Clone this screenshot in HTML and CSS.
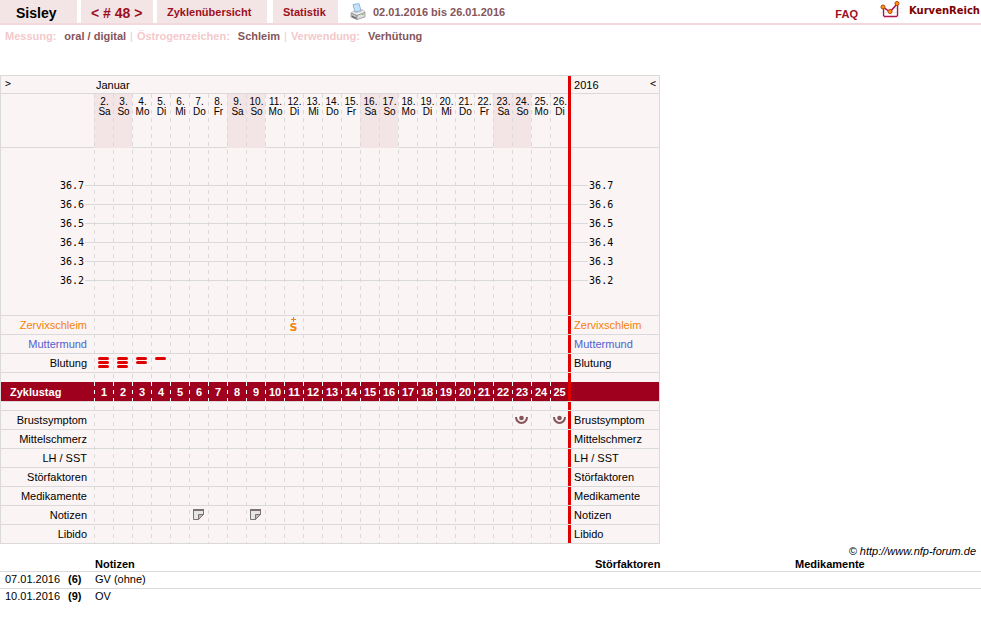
FILE: index.html
```html
<!DOCTYPE html>
<html lang="de">
<head>
    <meta charset="UTF-8">
    <title>KurvenReich - Sisley</title>
    <meta name="viewport" content="width=device-width, initial-scale=1.0">
    <link rel="stylesheet" href="styles.css">
</head>
<body>
<header class="top">
    <h1 class="tab name">Sisley</h1>
    <div class="tab cycle"><a href="#">&lt;</a> <a href="#"># 48</a> <a href="#">&gt;</a></div>
    <a class="tab overview" href="#">Zyklenübersicht</a>
    <a class="tab stats" href="#">Statistik</a>
    <a class="print" href="#" aria-label="Drucken">
        <svg width="16" height="18" viewBox="0 0 16 18">
            <path d="M3 1.500l6-.8 2 7-6 1.300z" fill="#c5e2fa" stroke="#8fb3dc"/>
            <path d="M1 10l3-2 1 1.500 6-1 0-2 3 1 1 2-8 3z" fill="#eee" stroke="#aaa" stroke-width=".7"/>
            <path d="M1 10l6 2.500v4l-6-2.500z" fill="#c4c4c4" stroke="#888" stroke-width=".7"/>
            <path d="M7 12.500l8-3v4.500l-8 2.500z" fill="#dedede" stroke="#888" stroke-width=".7"/>
            <path d="M2 12.500l4 2v1.500l-4-2z" fill="#666"/>
            <path d="M12 11.500h1.500" stroke="#8bbf5c"/>
        </svg>
    </a>
    <span class="range">02.01.2016 bis 26.01.2016</span>
    <a class="faq" href="#">FAQ</a>
    <a class="logo" href="#">
        <svg width="26" height="20" viewBox="0 0 26 20">
            <path d="M0 12.500h24M3 8.500h20M5.500 8v11M12.500 8v11M19.500 5v14" stroke="#eee" fill="none"/>
            <path d="M4.500 8v7.500l1 1h12l1-1V4" stroke="#b0124f" stroke-width="1.300" fill="none"/>
            <path d="M4 7l7 5 7-8" stroke="#a0104a" stroke-width="1.500" fill="none"/>
            <g fill="#ff9a0a" stroke="#b8400c">
                <circle cx="4" cy="7" r="2"/>
                <circle cx="11" cy="11.500" r="2"/>
                <circle cx="18" cy="3.500" r="2"/>
            </g>
        </svg>
        <span>KurvenReich</span>
    </a>
</header>

<div class="info">
    <span class="key">Messung:</span><span class="value">oral / digital</span><i>|</i>
    <span class="key">Östrogenzeichen:</span><span class="value">Schleim</span><i>|</i>
    <span class="key">Verwendung:</span><span class="value">Verhütung</span>
</div>

<table class="chart">
    <colgroup id="cols"></colgroup>
    <tbody id="chart"></tbody>
</table>

<p class="copy"><a href="#">© http://www.nfp-forum.de</a></p>

<table class="notes">
    <thead>
    <tr>
        <th class="date"></th>
        <th class="day"></th>
        <th class="note">Notizen</th>
        <th class="factor">Störfaktoren</th>
        <th>Medikamente</th>
    </tr>
    </thead>
    <tbody>
    <tr>
        <td class="date">07.01.2016</td>
        <td class="day">(6)</td>
        <td>GV (ohne)</td>
        <td></td>
        <td></td>
    </tr>
    <tr>
        <td class="date">10.01.2016</td>
        <td class="day">(9)</td>
        <td>OV</td>
        <td></td>
        <td></td>
    </tr>
    </tbody>
</table>
<script src="chart.js"></script>
</body>
</html>
```

FILE: styles.css
```css
* {
    margin: 0;
    padding: 0;
    box-sizing: border-box;
}

body {
    background: #fff;
    color: #000;
    font: 11px/14px "Liberation Sans", Arial, sans-serif;
}

a {
    color: inherit;
    text-decoration: none;
}

svg {
    display: block;
}

/* header */
.top {
    display: flex;
    height: 25px;
    border-bottom: 2px solid #f3d9db;
    color: #9b1022;
    font-weight: bold;
    line-height: 24px;
    white-space: nowrap;
}

.tab {
    background: #f3e4e5;
    margin-right: 4px;
    padding: 0 10px;
}

.name {
    width: 77px;
    padding: 0 16px;
    color: #000;
    font-size: 14px;
    line-height: 26px;
}

.cycle {
    width: 72px;
    font-size: 14px;
    line-height: 26px;
}

.overview {
    width: 110px;
    margin-right: 6px;
}

.stats {
    width: 65px;
}

.print {
    padding: 3px 7px 0 8px;
}

.range {
    color: #85555a;
}

.faq {
    margin-left: auto;
    line-height: 28px;
}

.logo {
    display: flex;
    gap: 4px;
    padding: 0 1px 0 21px;
    color: #7d0000;
    font: bold 10px/22px "DejaVu Sans", Verdana, sans-serif;
}

.info {
    display: flex;
    padding: 4px 5px;
    margin-bottom: 28px;
    font-weight: bold;
}

.info .key {
    color: #f3c9cb;
    margin-right: 8px;
}

.info .value {
    color: #85555a;
}

.info i {
    margin: 0 4px;
    color: #f3c9cb;
    font-style: normal;
    font-weight: normal;
}

/* chart */
.chart, .chart .dash {
    --bg: #faf4f4;
    --dash: #dadada;
    background-color: var(--bg);
    background-image: linear-gradient(90deg, transparent 1px, var(--bg) 1px), linear-gradient(var(--dash) 4px, var(--bg) 4px);
    background-size: 19px 8px;
}

.chart {
    width: 660px;
    table-layout: fixed;
    border-collapse: separate;
    border-spacing: 0;
    border: 1px solid #dadada;
    border-bottom: 0;
    background-position: 93px 2px;
}

.col-label {
    width: 93px;
}

.col-day {
    width: 19px;
}

.col-last {
    width: 18px;
}

.col-end {
    width: 3px;
}

.chart td, .chart th {
    height: 19px;
    border-bottom: 1px solid #dadada;
    font-weight: normal;
}

.chart .left, .chart .right, .chart .month {
    background-color: #faf4f4;
}

.chart .left {
    padding-right: 7px;
    text-align: right;
}

.chart .right {
    padding-left: 3px;
    text-align: left;
}

.chart .head td, .chart .head th {
    height: 18px;
}

.chart .month {
    padding-left: 2px;
    text-align: left;
}

.chart .head .left {
    padding-left: 4px;
    text-align: left;
    vertical-align: top;
}

.year {
    display: flex;
    justify-content: space-between;
    padding-right: 3px;
}

.arrow {
    font: 10px/12px "DejaVu Sans Mono", monospace;
}

.chart .end {
    background: #e00000;
}

.chart .head .end, .chart .dates .end {
    border-color: #e00000;
}

.chart .dates th {
    height: 54px;
    padding: 3px 0 0 2px;
    font: 10px/10px "Liberation Sans Narrow", "Liberation Sans", sans-serif;
    text-align: center;
    vertical-align: top;
}

.chart .weekend {
    --bg: #f3e4e5;
    border-color: var(--bg);
}

.chart .space td, .chart .temp td, .chart .temp th {
    border-bottom: 0;
}

.chart .above td {
    height: 28px;
}

.chart .below td {
    height: 26px;
    border-bottom: 1px solid #dadada;
}

.chart .temp td, .chart .temp th {
    font: 10px/19px "DejaVu Sans Mono", monospace;
}

.temp td {
    background: linear-gradient(#dadada, #dadada) 0 9px / 100% 1px no-repeat;
}

.chart .temp .left {
    padding-right: 10px;
    background: #faf4f4 linear-gradient(#dadada, #dadada) right 9px / 9px 1px no-repeat;
}

.chart .temp .right {
    padding-left: 18px;
    background: #faf4f4 linear-gradient(#dadada, #dadada) 0 9px / 17px 1px no-repeat;
}

.chart .mucus {
    color: #f5820a;
}

.chart .cervix {
    color: #5062d0;
}

/* mucus quality: plus sign above the letter */
.quality {
    height: 18px;
    padding-top: 1px;
    font: bold 11px/12px "DejaVu Sans", Verdana, sans-serif;
    text-align: center;
}

.chart .gap td {
    height: 9px;
    border-bottom: 0;
}

.chart .gap.after td {
    border-bottom: 1px solid #dadada;
}

.chart .band td, .chart .band th {
    --bg: #9e001e;
    --dash: #fff;
    height: 20px;
    background-color: #9e001e;
    color: #fff;
    font-weight: bold;
    text-align: center;
}

.chart .band td {
    padding-left: 1px;
}

.chart .band .left {
    padding-left: 9px;
    text-align: left;
}

.chart .band .end {
    background: #e00000;
}

.chart td svg {
    margin: 0 auto;
}

/* notes */
.copy {
    padding-right: 5px;
    line-height: 14px;
    text-align: right;
    font-style: italic;
}

.notes {
    width: 100%;
    table-layout: fixed;
    border-spacing: 0;
}

.notes th {
    height: 13px;
    line-height: 13px;
    text-align: left;
}

.notes td {
    height: 17px;
    border-top: 1px solid #dadada;
    vertical-align: top;
}

.notes .date {
    width: 68px;
    padding-left: 5px;
}

.notes .day {
    width: 27px;
    font-weight: bold;
}

.notes .note {
    width: 500px;
}

.notes .factor {
    width: 200px;
}
```

FILE: chart.js
```javascript
var days = 25;
var weekdays = ['So', 'Mo', 'Di', 'Mi', 'Do', 'Fr', 'Sa'];

var bars = function (n) {
    var s = '<svg width="19" height="18" viewBox="0 0 19 18">';
    for (var i = 0; i < n; i++) {
        s += '<rect x="4" y="' + (3 + i * 4) + '" width="11" height="3" rx="1.5" fill="#e00000"/>';
    }
    return s + '</svg>';
};
var mucus = '<div class="quality"><svg width="5" height="5" viewBox="0 0 5 5"><path d="M2.500 0v5M0 2.500h5" stroke="#f5820a"/></svg>S</div>';
var breast = '<svg width="19" height="18" viewBox="0 0 19 18"><path d="M4 6a5.500 6 0 0 0 11 0" stroke="#85555a" stroke-width="2" fill="none"/>' +
    '<circle cx="9.500" cy="7" r="2.300" fill="#85555a"/></svg>';
var note = '<svg width="19" height="18" viewBox="0 0 19 18"><path d="M4.500 3.500h10v5l-5 5h-5z" fill="#e6e6e6" stroke="#7c7174"/>' +
    '<path d="M4 4h11" stroke="#7c7174" stroke-width="2"/><path d="M9.500 13.500v-5h5z" fill="#bbb" stroke="#7c7174"/></svg>';

// one table row: label, a cell for each day, red end line, label again
function row(cls, label, cells) {
    var html = '<tr class="' + cls + '">';
    html += label ? '<th class="left" scope="row">' + label + '</th>' : '<td class="left"></td>';
    for (var d = 1; d <= days; d++) {
        html += '<td>' + (cells[d] || '') + '</td>';
    }
    return html + '<td class="end"></td><td class="right">' + label + '</td></tr>';
}

var cols = '<col class="col-label">';
var dates = '<tr class="dates"><td class="left"></td>';
var numbers = '<tr class="band"><th class="left" scope="row">Zyklustag</th>';
for (var d = 1; d <= days; d++) {
    var wd = new Date(2016, 0, d + 1).getDay();
    var weekend = wd === 0 || wd === 6;
    cols += '<col class="' + (d === days ? 'col-last' : 'col-day') + '">';
    dates += '<th class="dash' + (weekend ? ' weekend' : '') + '">' + (d + 1) + '.<br>' + weekdays[wd] + '</th>';
    numbers += '<td class="dash">' + d + '</td>';
}
cols += '<col class="col-end"><col>';
dates += '<td class="end"></td><td class="right"></td></tr>';
numbers += '<td class="end"></td><td class="right"></td></tr>';

var html = '<tr class="head"><td class="left"><a class="arrow" href="#">&gt;</a></td>' +
    '<th class="month" colspan="' + days + '">Januar</th><td class="end"></td>' +
    '<td class="right"><div class="year">2016 <a class="arrow" href="#">&lt;</a></div></td></tr>';
html += dates;
html += row('space above', '', {});
['36.7', '36.6', '36.5', '36.4', '36.3', '36.2'].forEach(function (t) {
    html += row('temp', t, {});
});
html += row('space below', '', {});
html += row('mucus', 'Zervixschleim', {11: mucus});
html += row('cervix', 'Muttermund', {});
html += row('', 'Blutung', {1: bars(3), 2: bars(3), 3: bars(2), 4: bars(1)});
html += row('gap', '', {});
html += numbers;
html += row('gap after', '', {});
html += row('', 'Brustsymptom', {23: breast, 25: breast});
html += row('', 'Mittelschmerz', {});
html += row('', 'LH / SST', {});
html += row('', 'Störfaktoren', {});
html += row('', 'Medikamente', {});
html += row('', 'Notizen', {6: note, 9: note});
html += row('', 'Libido', {});

document.getElementById('cols').innerHTML = cols;
document.getElementById('chart').innerHTML = html;
```
